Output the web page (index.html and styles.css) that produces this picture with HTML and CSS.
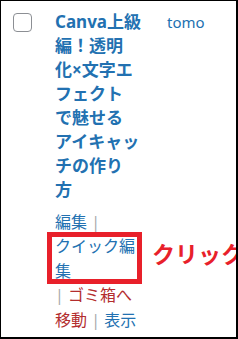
FILE: index.html
```html
<!DOCTYPE html>
<html lang="ja">
<head>
    <meta charset="UTF-8">
    <meta name="viewport" content="width=device-width, initial-scale=1.0">
    <title>投稿一覧</title>
    <link rel="stylesheet" href="styles.css">
</head>
<body>
    <div class="frame">
        <div class="post-row">
            <span class="check"></span>
            <div class="title-col">
                <a class="row-title">Canva上級<br>編！透明<br>化×文字エ<br>フェクト<br>で魅せる<br>アイキャッ<br>チの作り<br>方</a>
                <div class="row-actions">
                    <a class="act">編集</a> <span class="sep">|</span><br>
                    <a class="act">クイック編<br>集</a><br>
                    <span class="sep">|</span> <a class="act trash">ゴミ箱へ<br>移動</a> <span class="sep">|</span> <a class="act">表示</a>
                    <!-- 注釈 -->
                    <span class="mark-box"></span>
                    <span class="mark-label">クリック</span>
                </div>
            </div>
            <a class="author">tomo</a>
        </div>
    </div>
</body>
</html>
```

FILE: styles.css
```css
body {
    margin: 0;
    background: #fff;
    font-family: "Noto Sans", "Noto Sans CJK JP", sans-serif;
}
.frame {
    width: 238px;
    height: 339px;
    box-sizing: border-box;
    border: 1px solid #000;
    border-right-width: 2px;
    border-bottom-width: 2px;
    overflow: hidden;
    background: #fff;
}
.post-row {
    display: flex;
    align-items: flex-start;
    padding: 9px 0 0 12px;
}
.check {
    width: 19px;
    height: 19px;
    margin-top: 3px;
    box-sizing: border-box;
    border: 1px solid #8c8f94;
    border-radius: 4px;
    background: #fff;
    flex-shrink: 0;
}
.title-col {
    width: 90px;
    margin-left: 23px;
    flex-shrink: 0;
}
.row-title {
    display: block;
    font-size: 17px;
    line-height: 24px;
    font-weight: bold;
    color: #2271b1;
}
.row-actions {
    position: relative;
    margin-top: 8px;
    font-size: 16px;
    line-height: 24.4px;
    color: #2271b1;
    white-space: nowrap;
}
.act { color: #2271b1; }
.act.trash { color: #b32d2e; }
.sep { color: #a7aaad; }
.author {
    margin-left: 22px;
    font-size: 15px;
    line-height: 24px;
    color: #2271b1;
}
.mark-box {
    position: absolute;
    left: -8px;
    top: 22px;
    width: 95px;
    height: 52px;
    box-sizing: border-box;
    border: 5px solid #e8202a;
}
.mark-label {
    position: absolute;
    left: 97px;
    top: 33px;
    font-size: 23px;
    line-height: 23px;
    font-weight: bold;
    color: #e8202a;
}
```
